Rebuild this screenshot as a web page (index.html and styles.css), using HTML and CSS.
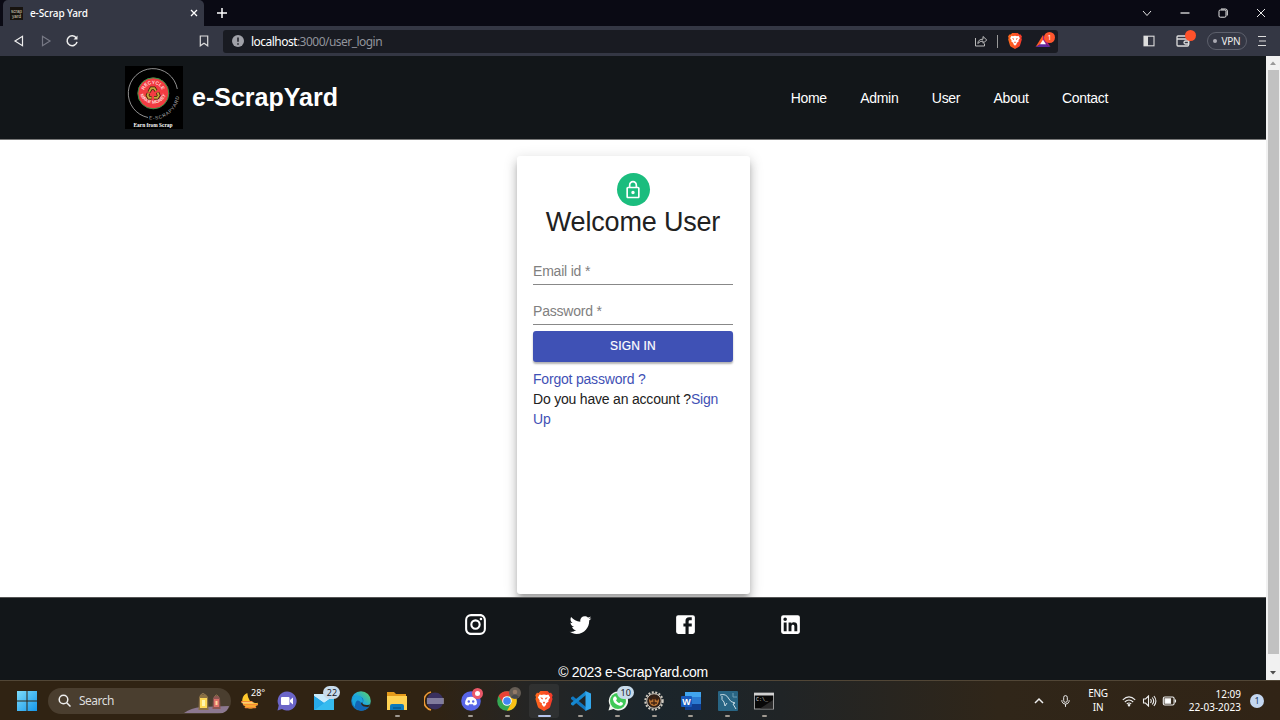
FILE: index.html
```html
<!DOCTYPE html>
<html lang="en">
<head>
<meta charset="utf-8">
<title>e-Scrap Yard</title>
<link rel="stylesheet" href="styles.css">
</head>
<body>
<svg width="0" height="0" class="defs">
  <defs>
    <linearGradient id="braveGrad" x1="0" x2="1"><stop offset="0" stop-color="#ff6a1c"/><stop offset="1" stop-color="#f3382b"/></linearGradient>
    <linearGradient id="winGrad" x1="0" y1="0" x2="1" y2="1"><stop offset="0" stop-color="#7ddcfb"/><stop offset="1" stop-color="#1596e8"/></linearGradient>
    <linearGradient id="edgeGrad" x1="0" y1="1" x2="1" y2="0"><stop offset="0" stop-color="#0c59a4"/><stop offset=".5" stop-color="#20a8df"/><stop offset="1" stop-color="#62d957"/></linearGradient>
    <symbol id="brave" viewBox="0 0 20 23">
      <path fill="url(#braveGrad)" d="M6 0h8l2.200 2.200 1.900-.2L20 5l-.8 2.300.6 2-2.600 8.500q-.4 1.300-1.500 2.100L10 23l-5.700-3.100q-1.100-.8-1.500-2.100L.2 9.300l.6-2L0 5l1.900-3 1.900.2z"/>
      <path fill="#fff" d="M10 4l3 .6 2-.5 2 3.400-2 3 .3 1.600-3 2.400.2 1.300L10 18.500l-2.500-2.700.2-1.300-3-2.400.3-1.600-2-3 2-3.400 2 .5z"/>
      <path fill="#f4491f" d="M5.700 7.300l3 .8-.6 2zM14.300 7.300l-3 .8.6 2zM8.700 12.200L10 13l1.300-.8-.6 2.300H9.300z"/>
    </symbol>
  </defs>
</svg>
<header class="tabs">
  <div class="tab">
    <svg class="favicon" viewBox="0 0 13 13"><rect width="13" height="13" fill="#17130f"/><text x="6.500" y="5.500" textLength="11" lengthAdjust="spacingAndGlyphs">scrap</text><text x="6.500" y="10.800" textLength="9" lengthAdjust="spacingAndGlyphs">yard</text></svg>
    <span class="tab-title">e-Scrap Yard</span>
    <svg class="tab-close" viewBox="0 0 8 8"><path d="M1 1l6 6M7 1L1 7"/></svg>
  </div>
  <svg class="new-tab" viewBox="0 0 10 10"><path d="M5 0v10M0 5h10"/></svg>
  <div class="window-controls">
    <svg viewBox="0 0 10 10"><path d="M1 3l4 4.500L9 3"/></svg>
    <svg viewBox="0 0 10 10"><path d="M.5 5h9" stroke-width="1.300"/></svg>
    <svg viewBox="0 0 10 10"><rect x="1" y="2" width="7" height="7.200" rx="1.300"/><path d="M3 1h4.500Q9.300 1 9.300 3v4.500"/></svg>
    <svg viewBox="0 0 10 10"><path d="M1 1l8 8M9 1L1 9"/></svg>
  </div>
</header>
<div class="toolbar">
  <div class="nav-buttons">
    <svg viewBox="0 0 14 14"><path d="M10.500 2.300v9.400L3 7z"/></svg>
    <svg class="disabled" viewBox="0 0 14 14"><path d="M3.500 2.300v9.400L11 7z"/></svg>
    <svg viewBox="0 0 14 14"><path d="M11.300 4A5 5 0 1 0 12 7.800" stroke-width="1.500"/><path d="M12.500 1.500V5.500H8.500z" fill="#eee" stroke="none"/></svg>
  </div>
  <svg class="bookmark" viewBox="0 0 10 12"><path d="M1.300 1h7.400v9.800L5 8.300l-3.700 2.500z"/></svg>
  <div class="address">
    <svg class="info" viewBox="0 0 12 12"><circle cx="6" cy="6" r="6" fill="#a0a1a8"/><path d="M6 2.500v4.300M6 8.300v1.400" stroke="#1b1d24" stroke-width="1.500"/></svg>
    <span class="url"><b>localhost</b>:3000/user_login</span>
    <svg class="share" viewBox="0 0 14 14"><path d="M1.500 4v8h9V9.500M3.800 9.500C4 6.500 6 5.200 9 5.200V2.500L12.800 6 9 9.300V7Q6 7 3.800 9.500z"/></svg>
    <i class="separator"></i>
    <svg class="shield"><use href="#brave"/></svg>
    <span class="rewards">
      <svg viewBox="0 0 16 14"><path fill="#ff5a26" d="M8 0L0 13 8 8.500z"/><path fill="#9e1f82" d="M8 0l8 13-8-4.500z"/><path fill="#5e2a9e" d="M0 13h16L8 8z"/><path fill="#fff" d="M8 5l3.200 5H4.800z"/></svg>
      <b>1</b>
    </span>
  </div>
  <svg class="sidebar-icon" viewBox="0 0 12 12"><rect x="1" y="1.200" width="10" height="9.600" fill="none" stroke="#ddd" stroke-width="1.100"/><path d="M1 1h4v10H1z" fill="#ddd"/></svg>
  <span class="wallet"><svg viewBox="0 0 14 12"><path d="M10 1H2Q1 1 1 2v8q0 1 1 1h9.500q1 0 1-1V4H1M12.800 6H9.500a1.500 1.500 0 0 0 0 3h3.300z"/></svg><i></i></span>
  <span class="vpn"><i></i>VPN</span>
  <svg class="menu" viewBox="0 0 8 12"><path d="M0 1.500h8M1 6h7M0 10.500h8"/></svg>
</div>
<div class="viewport">
  <div class="page">
    <header class="site-header">
      <svg class="logo" viewBox="0 0 58 63">
        <defs>
          <path id="ringTop" d="M18.500 27.500a9.500 9.500 0 0 1 19 0"/>
          <path id="ringLow" d="M14.300 25.500a13.800 13.800 0 0 0 27.400 0"/>
          <path id="ringOuter" d="M24 53.300A26.500 26.500 0 0 0 54.300 24"/>
        </defs>
        <rect width="58" height="63" fill="#000"/>
        <path d="M23 51.500A24.700 24.700 0 1 1 52.300 23" fill="none" stroke="#b5b5b5" stroke-width=".8"/>
        <circle cx="28.300" cy="27.300" r="15.500" fill="#f23c42" stroke="#329447" stroke-width="1"/>
        <g class="logo-ring"><text><textPath href="#ringTop" startOffset="50%">RECYCLE</textPath></text><text><textPath href="#ringLow" startOffset="50%">MAKE MONEY</textPath></text></g>
        <g fill="none" stroke="#302007" stroke-width="3.400"><path d="M24 26l2.200-3.700h3l1.800 2.500M32.500 26.500l1.300 3-1.500 2.200H29M26.500 31.700h-2.700l-1.300-2.500 1-2"/></g>
        <g fill="none" stroke="#c5a63a" stroke-width="1.900"><path d="M24 26l2.200-3.700h3l1.800 2.500M32.500 26.500l1.300 3-1.500 2.200H29M26.500 31.700h-2.700l-1.300-2.500 1-2"/></g>
        <text class="logo-outer" textLength="42"><textPath href="#ringOuter">E-SCRAPYARD</textPath></text>
        <text class="logo-caption" x="28" y="60.500" textLength="39" lengthAdjust="spacingAndGlyphs">Earn from Scrap</text>
      </svg>
      <h1>e-ScrapYard</h1>
      <nav><a>Home</a><a>Admin</a><a>User</a><a>About</a><a>Contact</a></nav>
    </header>
    <main>
      <section class="card">
        <div class="avatar"><svg viewBox="0 0 24 24"><path d="M18 8h-1V6c0-2.760-2.240-5-5-5S7 3.240 7 6v2H6c-1.100 0-2 .9-2 2v10c0 1.100.9 2 2 2h12c1.100 0 2-.9 2-2V10c0-1.100-.9-2-2-2zM9 6c0-1.660 1.340-3 3-3s3 1.340 3 3v2H9V6zm9 14H6V10h12v10zm-6-3c1.100 0 2-.9 2-2s-.9-2-2-2-2 .9-2 2 .9 2 2 2z"/></svg></div>
        <h2>Welcome User</h2>
        <label class="field">Email id *</label>
        <label class="field password">Password *</label>
        <button>SIGN IN</button>
        <p><a>Forgot password ?</a></p>
        <p>Do you have an account ?<a>Sign Up</a></p>
      </section>
    </main>
    <footer>
      <div class="social">
        <svg viewBox="0 0 24 24"><path d="M7.800 2h8.400C19.400 2 22 4.600 22 7.800v8.400a5.800 5.800 0 0 1-5.800 5.800H7.800C4.600 22 2 19.400 2 16.200V7.800A5.800 5.800 0 0 1 7.800 2m-.2 2A3.600 3.600 0 0 0 4 7.600v8.800C4 18.390 5.610 20 7.600 20h8.800a3.600 3.600 0 0 0 3.600-3.600V7.600C20 5.610 18.390 4 16.400 4H7.600m9.650 1.500a1.250 1.250 0 0 1 0 2.500 1.250 1.250 0 0 1 0-2.500M12 7a5 5 0 0 1 0 10 5 5 0 0 1 0-10m0 2a3 3 0 0 0 0 6 3 3 0 0 0 0-6z"/></svg>
        <svg viewBox="0 0 24 24"><path d="M22.460 6c-.77.35-1.600.58-2.460.69.88-.53 1.560-1.370 1.880-2.380-.83.5-1.750.85-2.720 1.050C18.370 4.500 17.260 4 16 4c-2.350 0-4.270 1.920-4.270 4.290 0 .34.04.67.11.98C8.280 9.090 5.110 7.380 3 4.790c-.37.63-.58 1.370-.58 2.150 0 1.490.75 2.810 1.910 3.560-.71 0-1.370-.2-1.950-.5v.03c0 2.080 1.480 3.820 3.440 4.210a4.220 4.220 0 0 1-1.930.07 4.280 4.280 0 0 0 4 2.980 8.521 8.521 0 0 1-5.330 1.840c-.34 0-.68-.02-1.020-.06C3.440 20.290 5.700 21 8.120 21 16 21 20.330 14.460 20.330 8.790c0-.19 0-.37-.01-.56.84-.6 1.560-1.360 2.140-2.230z"/></svg>
        <svg viewBox="0 0 24 24"><path d="M5 3h14a2 2 0 0 1 2 2v14a2 2 0 0 1-2 2H5a2 2 0 0 1-2-2V5a2 2 0 0 1 2-2m13 2h-2.500A3.500 3.500 0 0 0 12 8.500V11h-2v3h2v7h3v-7h3v-3h-3V9a1 1 0 0 1 1-1h2V5z"/></svg>
        <svg viewBox="0 0 24 24"><path d="M19 3a2 2 0 0 1 2 2v14a2 2 0 0 1-2 2H5a2 2 0 0 1-2-2V5a2 2 0 0 1 2-2h14m-.5 15.500v-5.300a3.260 3.260 0 0 0-3.260-3.260c-.85 0-1.840.52-2.320 1.300v-1.110h-2.790v8.370h2.790v-4.930c0-.77.62-1.400 1.390-1.400a1.400 1.400 0 0 1 1.400 1.400v4.930h2.790M6.880 8.560a1.680 1.680 0 0 0 1.680-1.680c0-.93-.75-1.690-1.680-1.690a1.690 1.690 0 0 0-1.690 1.690c0 .93.76 1.680 1.690 1.680m1.390 9.940v-8.370H5.500v8.370h2.770z"/></svg>
      </div>
      <p>© 2023 e-ScrapYard.com</p>
    </footer>
  </div>
  <div class="scrollbar">
    <svg viewBox="0 0 14 14"><path d="M4 9h6L7 5.500z" fill="#999"/></svg>
    <i></i>
    <svg viewBox="0 0 14 14"><path d="M4 5h6L7 8.500z" fill="#505050"/></svg>
  </div>
</div>
<div class="taskbar">
  <svg class="start" viewBox="0 0 20 20"><path fill="url(#winGrad)" d="M0 0h9.500v9.500H0zM10.500 0H20v9.500h-9.500zM0 10.500h9.500V20H0zM10.500 10.500H20V20h-9.500z"/></svg>
  <div class="search">
    <svg class="glass" viewBox="0 0 13 13"><circle cx="5.500" cy="5.500" r="4.300"/><path d="M8.700 8.700L12.500 12.500"/></svg>
    <span>Search</span>
    <svg class="lanterns" viewBox="0 0 48 26"><path d="M1 25Q8 20 18 19l28-1q-1 5-6 7z" fill="#8c7890"/><g stroke="#9a7f55" fill="none"><path d="M17 8Q20 3 23 8M31.500 9Q33.500 5 35.500 9"/></g><path d="M16 9l2-2.500h5L25 9l.5 13h-10z" fill="#8b7145"/><path d="M17 10h7v10h-7z" fill="#ffd957"/><path d="M19 12h3v6h-3z" fill="#fff5ae"/><path d="M30 10l2-2h3l2 2 .5 11h-8z" fill="#8e5652"/><path d="M31 11h5v8h-5z" fill="#de716a"/><path d="M32.500 13h2v4h-2z" fill="#ffd59c"/></svg>
  </div>
  <div class="apps">
    <div class="app weather"><svg viewBox="0 0 20 20"><path d="M7 1a9 9 0 1 0 12 11Q8 14 7 1z" fill="#ffc92c"/><path d="M1 11h11M3 14h15M5 17h11" stroke="#f48b37" stroke-width="2" stroke-linecap="round"/><path d="M1 12h13" stroke="#ffe3a4"/></svg><b>28°</b></div>
    <div class="app"><svg viewBox="0 0 20 20"><path d="M10 .5A9.500 9.500 0 1 1 5 18l-4.500 1.500 1.200-5A9.500 9.500 0 0 1 10 .5z" fill="#6b65c8"/><rect x="4" y="6" width="8.500" height="8" rx="1" fill="#fff"/><path d="M13 9l3-2.500v7L13 11z" fill="#fff"/></svg></div>
    <div class="app mail"><svg viewBox="0 0 20 20"><path d="M0 4h20v15H0z" fill="#168edb"/><path d="M0 5l10 7 10-7v-2H0z" fill="#c9ebfc"/><path d="M0 5l10 7L0 19z" fill="#27aae9"/><path d="M20 5L0 19h20z" fill="#36bbef"/></svg><b class="badge">22</b></div>
    <div class="app"><svg viewBox="0 0 20 20"><circle cx="10" cy="10" r="9.800" fill="url(#edgeGrad)"/><path d="M1 8Q5 3 10 6c4 2 2 6 1 7 1 3 5 3 8 1-3 6-9 7-13 4Q1 14 1 8z" fill="#1266b5"/><path d="M1 8C4 3 10 4 11.500 8q1 3-1 4.500C7 7 4 10 4 16Q1 13 1 8z" fill="#1ba5dc"/><path d="M11 11q0 3 5 3 3 0 3.300-1.500Q19 15 17 16q-6 0-7-3.500z" fill="#2f2416"/></svg></div>
    <div class="app open"><svg viewBox="0 0 20 20"><path d="M0 1h7l2 2h10v5H0z" fill="#e49a1b"/><path d="M0 5h20v14H0z" fill="#ffd253"/><path d="M3 19v-4q0-2 2-2h10q2 0 2 2v4z" fill="#0d79bc"/><path d="M6 17h8" stroke="#034978"/></svg></div>
    <div class="app"><svg viewBox="0 0 20 20"><path d="M7 1a9.300 9.300 0 0 0 0 18" fill="none" stroke="#ef9a35" stroke-width="1.800"/><circle cx="11" cy="10" r="8.500" fill="#39305f"/><path d="M3 7.500h17v1H3zM3 9.500h17v1H3zM3 11.500h17v1H3z" fill="#c9c8dc"/></svg></div>
    <div class="app open"><svg viewBox="0 0 20 20"><circle cx="10" cy="10" r="9.800" fill="#5865e8"/><path d="M6 6.500q4-1.500 8 0 2 3 2 6.500-1.500 1.500-3.500 1.500L12 13.300H8l-.5 1.200Q5.500 14.500 4 13q0-3.500 2-6.500z" fill="#fff"/><circle cx="7.800" cy="10.500" r="1.200" fill="#5865e8"/><circle cx="12.200" cy="10.500" r="1.200" fill="#5865e8"/></svg><b class="dot"></b></div>
    <div class="app open"><svg viewBox="0 0 20 20"><circle cx="10" cy="10" r="9.800" fill="#35a853"/><path d="M1.500 5A9.800 9.800 0 0 1 18.500 5.200H10L6 12z" fill="#e84235"/><path d="M18.500 5.200A9.800 9.800 0 0 1 10 19.800l4.500-8L12 5.200z" fill="#fbc116"/><circle cx="10" cy="10" r="4.800" fill="#fff"/><circle cx="10" cy="10" r="3.800" fill="#4285f4"/></svg><svg class="profile" viewBox="0 0 12 12"><circle cx="6" cy="6" r="6" fill="#655d55"/><circle cx="6" cy="5" r="2.300" fill="#927a68"/><path d="M2 10q4-5 8 0-4 3-8 0z" fill="#46494d"/></svg></div>
    <div class="app open active"><svg viewBox="0 0 20 20"><use href="#brave" x="1" width="18" height="20"/></svg></div>
    <div class="app open"><svg viewBox="0 0 20 20"><path d="M0 6.500l2-1.300L15 16v4L0 8z" fill="#1177c0"/><path d="M0 13.500l2 1.300L15 4V0L0 12z" fill="#1688cf"/><path d="M14.500 0L20 2.500v15L14.500 20z" fill="#33a8ed"/></svg></div>
    <div class="app open"><svg viewBox="0 0 20 20"><path d="M10 .5A9.500 9.500 0 1 1 5.500 18L.5 19.500l1.400-5A9.500 9.500 0 0 1 10 .5z" fill="#f1f5ef"/><circle cx="10" cy="10" r="8" fill="#40c957"/><path d="M6.500 5.500Q8 4.500 9 8l-1 1.200q1 2 3.200 3l1.300-1.400q3 1 2.500 2.200-1 2.500-4 1.500-5-1.500-6-6-.2-2 1.500-3z" fill="#fff"/></svg><b class="badge">10</b></div>
    <div class="app open"><svg viewBox="0 0 20 20"><circle cx="10" cy="10" r="8.700" fill="none" stroke="#d2ccc2" stroke-width="2" stroke-dasharray="2 1.500"/><circle cx="10" cy="10" r="7.300" fill="#302018" stroke="#d2ccc2" stroke-width="1"/><path d="M5 8h10v2q-1 5-5 5t-5-5z" fill="#b77233"/><path d="M5 7l2 2 3-3 3 3 2-2M7 12h6M10 8v6" stroke="#412312" fill="none" stroke-width="1.300"/></svg></div>
    <div class="app open"><svg viewBox="0 0 20 20"><path d="M4 1h16v18H4z" fill="#2b7cd3"/><path d="M4 1h16v5H4z" fill="#41a5ee"/><path d="M4 13h16v6H4z" fill="#103f91"/><rect y="5" width="11" height="11" rx="1" fill="#185abd"/><text class="word-w" x="5.500" y="13.500">W</text></svg></div>
    <div class="app open"><svg viewBox="0 0 20 20"><rect width="20" height="20" rx="1" fill="#286584"/><path d="M2 4q6-2 9 4 1 3 6 4l-2 1 3 5M4 5q-1 4 2 6l1 4 2-3" stroke="#c9dce4" fill="none"/><path d="M15 2v4h4" stroke="#6c9fb5" fill="none"/></svg></div>
    <div class="app open"><svg viewBox="0 0 20 20"><rect x=".5" y="2" width="19" height="16" fill="#080808" stroke="#9b9b9b"/><path d="M0 2h20v2.500H0z" fill="#d1d1d1"/><text class="prompt" x="2" y="10">C:\_</text><path d="M19 9v8.500H6z" fill="#2a2a2a"/></svg></div>
  </div>
  <div class="tray">
    <svg class="up" viewBox="0 0 10 10"><path d="M1 7l4-4 4 4"/></svg>
    <svg class="mic" viewBox="0 0 10 14"><rect x="3" y="1" width="4" height="7.500" rx="2"/><path d="M1 6v1.500q1 3 4 3t4-3V6M5 10.500v3"/></svg>
    <span class="language">ENG<br>IN</span>
    <svg class="wifi" viewBox="0 0 14 12"><path d="M.8 4.800q6.200-6 12.400 0M2.800 7q4.200-4 8.400 0M4.800 9q2.200-2 4.400 0"/><circle cx="7" cy="10.300" r=".7" fill="#fff"/></svg>
    <svg class="sound" viewBox="0 0 14 12"><path d="M1 4h2l3-3v10L3 8H1zM8 4q1.500 2 0 4M9.700 2.500q3 3.500 0 7M11.400 1q4 5 0 10"/></svg>
    <svg class="battery" viewBox="0 0 14 10"><rect x=".8" y="1" width="10.800" height="8" rx="1.500"/><path d="M2.500 2.800H8v4.400H2.500z" fill="#fff"/><path d="M13 3.500v3"/></svg>
    <span class="clock">12:09<br>22-03-2023</span>
    <b class="count">1</b>
  </div>
</div>
</body>
</html>
```
FILE: styles.css
```css
* { box-sizing: border-box; }
body { margin: 0; width: 1280px; height: 720px; overflow: hidden; display: flex; flex-direction: column; font-family: "Liberation Sans", Arial, sans-serif; background: #fff; }
svg { display: block; flex: none; }
.defs { position: absolute; }
.tabs { height: 26px; flex: none; background: #0a0a14; display: flex; align-items: center; font-family: "Noto Sans", sans-serif; }
.tab { margin-left: 3px; width: 201px; height: 26px; background: #343744; border-radius: 5px 5px 0 0; display: flex; align-items: center; padding: 0 6px 0 7px; color: #fff; }
.favicon { width: 13px; height: 13px; overflow: visible; }
.favicon text { font: 6px "Liberation Sans", sans-serif; fill: #d8cfba; text-anchor: middle; }
.tab-title { font-size: 10px; font-weight: 500; margin-left: 7px; flex: 1; letter-spacing: -.12px; }
.tab-close { width: 8px; height: 8px; stroke: #fff; stroke-width: 1.3; }
.new-tab { width: 10px; height: 10px; margin-left: 13px; stroke: #fff; stroke-width: 1.5; }
.window-controls { margin-left: auto; display: flex; gap: 28px; padding-right: 14px; fill: none; stroke: #e7e7e7; }
.window-controls svg { width: 10px; height: 10px; }
.toolbar { height: 30px; flex: none; background: #343744; display: flex; align-items: center; font-family: "Noto Sans", sans-serif; padding-left: 12px; }
.nav-buttons { display: flex; gap: 12.5px; fill: none; stroke: #eee; stroke-width: 1.2; }
.nav-buttons svg { width: 14px; height: 14px; }
.nav-buttons .disabled { stroke: #777985; }
.bookmark { width: 10px; height: 12px; margin-left: 120px; fill: none; stroke: #ddd; stroke-width: 1.2; }
.address { width: 835px; height: 23px; margin-left: 14px; background: #191b22; border-radius: 3px; display: flex; align-items: center; padding-left: 9px; }
.info { width: 12px; height: 12px; }
.url { margin-left: 7px; font-size: 12px; color: #92949c; letter-spacing: -.53px; white-space: nowrap; }
.url b { font-weight: 400; color: #fff; }
.share { width: 14px; height: 14px; margin-left: auto; fill: none; stroke: #bbb; stroke-width: 1; }
.separator { width: 1px; height: 13px; background: #999; margin: 0 10px 0 9px; }
.shield { width: 14px; height: 16px; }
.rewards { width: 22px; height: 20px; margin: 0 1px 0 13px; position: relative; }
.rewards svg { width: 16px; height: 13px; margin-top: 4px; }
.rewards b { position: absolute; right: 2px; top: 1px; width: 11px; height: 11px; border-radius: 50%; background: #ff562f; color: #fff; font-size: 7px; line-height: 11px; text-align: center; font-weight: 400; }
.sidebar-icon { width: 12px; height: 12px; margin-left: 85px; }
.wallet { margin-left: 21px; width: 22px; position: relative; }
.wallet svg { width: 14px; height: 12px; fill: none; stroke: #ddd; stroke-width: 1.3; }
.wallet i { position: absolute; width: 11px; height: 11px; left: 9px; top: -5px; border-radius: 50%; background: #ff522b; }
.vpn { width: 40px; height: 18px; margin-left: 9px; border: 1px solid #5d606c; border-radius: 9px; color: #eee; font-size: 10px; letter-spacing: -.2px; display: flex; align-items: center; justify-content: center; gap: 4px; }
.vpn i { width: 4px; height: 4px; background: #aaaab3; border-radius: 50%; }
.menu { width: 8px; height: 12px; margin-left: 11px; stroke: #ddd; stroke-width: 1.2; }
.viewport { height: 624px; flex: none; display: flex; overflow: hidden; }
.page { width: 1266px; display: flex; flex-direction: column; }
.site-header { height: 84px; flex: none; background: #121619; border-bottom: 1px solid #777; display: flex; align-items: center; color: #fff; padding-left: 125px; padding-right: 158px; }
.logo { width: 58px; height: 63px; }
.logo-ring text { font: bold 4.8px "Liberation Sans", sans-serif; fill: #ffd9d7; text-anchor: middle; }
.logo-outer { font: 4.8px "Liberation Sans", sans-serif; fill: #b5b5b5; }
.logo-caption { font: bold 6px "Liberation Serif", serif; fill: #fff; text-anchor: middle; }
.site-header h1 { font-size: 25px; line-height: 30px; margin: 0 0 1px 9px; }
.site-header nav { margin-left: auto; display: flex; gap: 33.5px; font-size: 14px; letter-spacing: -.33px; }
main { flex: 1; padding-top: 16px; overflow: hidden; }
.card { width: 233px; height: 438px; margin: 0 auto; border-radius: 3px; background: #fff; padding: 17px 16.500px; box-shadow: 0 5px 5px -2px rgba(0,0,0,.2), 0 8px 9px 1px rgba(0,0,0,.14), 0 3px 13px 2px rgba(0,0,0,.12); font-size: 14px; letter-spacing: -.2px; line-height: 20px; color: #212121; }
.avatar { width: 33px; height: 33px; border-radius: 50%; background: #1bbd7e; margin: 0 auto; display: flex; align-items: center; justify-content: center; }
.avatar svg { width: 20px; height: 20px; fill: #fff; }
.card h2 { font-size: 27px; font-weight: 400; line-height: 32px; margin: 0; text-align: center; letter-spacing: -.18px; white-space: nowrap; }
.field { display: block; width: 200px; height: 27px; color: #808080; border-bottom: 1px solid #888; margin-top: 20px; line-height: 27px; }
.password { margin-top: 13px; }
.card button { display: block; width: 200px; height: 31px; border: 0; border-radius: 3px; background: #3f51b5; color: #fff; font: 500 12px/31px "Liberation Sans", sans-serif; letter-spacing: .16px; padding: 0; margin: 6px 0 7px; box-shadow: 0 2px 2px rgba(0,0,0,.3); -webkit-text-stroke: .2px #fff; }
.card p { margin: 0; }
.card a { color: #3f51b5; }
footer { height: 83px; flex: none; background: #121619; border-top: 1px solid #555; color: #fff; }
.social { display: flex; justify-content: center; gap: 80.3px; padding-top: 14px; fill: #fff; }
.social svg { width: 25px; height: 25px; }
footer p { margin: 27px 0 0; font-size: 14px; letter-spacing: -.34px; line-height: 16px; text-align: center; }
.scrollbar { width: 14px; background: #f1f1f1; display: flex; flex-direction: column; align-items: center; }
.scrollbar svg { width: 14px; height: 14px; }
.scrollbar i { width: 11px; height: 584px; background: #c1c1c1; }
.scrollbar svg:last-child { margin-top: auto; }
.taskbar { height: 40px; flex: none; background: linear-gradient(90deg,#302313 0,#302313 34%,#252524 41%,#1b252b 51%,#202426 61%,#302619 78%,#312416); border-top: 1px solid #514636; display: flex; align-items: center; padding-left: 17px; font-family: "Noto Sans", sans-serif; color: #fff; }
.start { width: 20px; height: 20px; }
.search { width: 183px; height: 26px; border-radius: 13px; margin-left: 11px; background: #4a3e2f; display: flex; align-items: center; padding-left: 10px; font-size: 12px; letter-spacing: -.5px; color: #ddd; overflow: hidden; }
.glass { width: 13px; height: 13px; margin-right: 8px; fill: none; stroke: #eee; stroke-width: 1.5; }
.lanterns { width: 48px; height: 26px; margin-left: auto; }
.apps { display: grid; grid-template-columns: repeat(15, 36.72px); height: 34px; margin-left: 1px; }
.app { position: relative; display: flex; align-items: center; justify-content: center; border-radius: 3px; }
.app > svg { width: 20px; height: 20px; }
.weather > svg { width: 18px; height: 18px; }
.open::after { content: ""; position: absolute; width: 5px; height: 2px; bottom: 1px; border-radius: 1px; background: #a09a92; }
.active { background: rgba(255,255,255,.06); margin: 0 3px; }
.active::after { width: 13px; background: #b5c5ee; }
.weather b { position: absolute; left: 19px; top: 3px; font-size: 9px; line-height: 12px; font-weight: 400; }
.badge { position: absolute; left: 18px; top: 2px; width: 17px; height: 13px; border-radius: 7px; background: #c8dbeb; color: #17202a; font-size: 9px; line-height: 13px; font-weight: 400; text-align: center; }
.dot { position: absolute; left: 20px; top: 4px; width: 11px; height: 11px; border: 3.500px solid #ec5969; background: #fff; border-radius: 50%; }
.app .profile { position: absolute; left: 20px; top: 3px; width: 12px; height: 12px; }
.word-w { font: bold 9px "Liberation Sans", sans-serif; fill: #fff; text-anchor: middle; }
.prompt { font: 5px "Liberation Mono", monospace; fill: #ddd; }
.tray { margin-left: auto; display: flex; align-items: center; padding-right: 16px; fill: none; stroke: #eee; stroke-width: 1.1; }
.tray .up { width: 10px; height: 10px; stroke-width: 1.5; }
.mic { width: 9px; height: 14px; margin-left: 17px; }
.language { width: 28px; margin-left: 14px; text-align: center; font-size: 10px; line-height: 13.500px; letter-spacing: -.25px; }
.wifi { width: 14px; height: 12px; margin-left: 10px; }
.sound { width: 15px; height: 12px; margin-left: 6px; }
.battery { width: 15px; height: 10px; margin-left: 5px; }
.clock { width: 63px; text-align: right; margin-left: 1px; font-size: 10px; line-height: 13px; letter-spacing: 0; }
.count { width: 14px; height: 14px; margin-left: 9px; border-radius: 50%; background: #c4d7f1; color: #193a64; font-size: 9px; line-height: 14px; font-weight: 400; text-align: center; }
```
